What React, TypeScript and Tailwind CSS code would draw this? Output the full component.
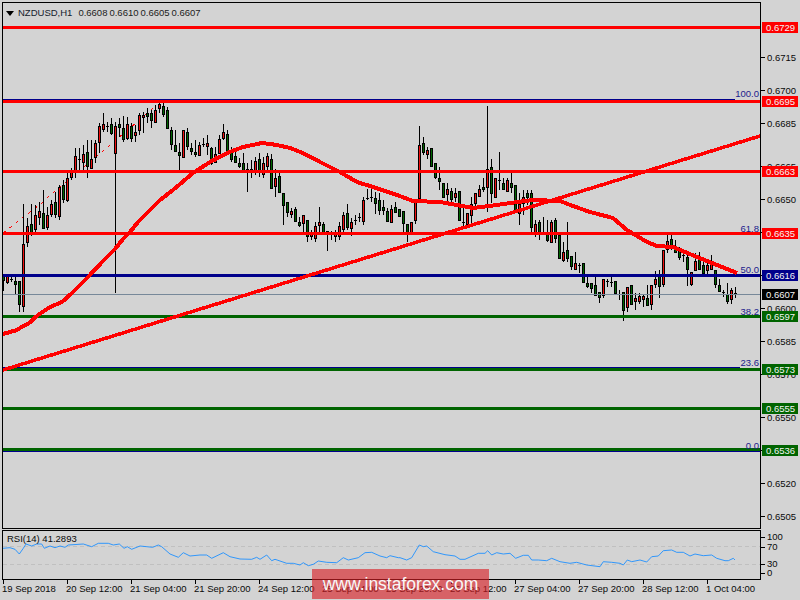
import React from "react";

type Row = [number, number, number, number, string];

const A: Row[] = [
  [275, 275, 280, 291, "g"], [275, 276, 282, 284, "r"], [277, 279, 279, 282, "d"], [277, 281, 284, 295, "g"],
  [281, 281, 304, 312, "g"], [204, 244, 306, 312, "r"], [218, 226, 242, 247, "r"], [204, 224, 232, 236, "g"],
  [205, 215, 229, 233, "r"], [202, 211, 217, 225, "r"], [190, 213, 228, 229, "g"], [207, 215, 227, 230, "r"],
  [200, 204, 214, 217, "r"], [192, 202, 214, 218, "g"],
];

const B: Row[] = [
  [555,562,647,660,"r"],[540,555,596,610,"g"],[520,534,600,605,"r"],[505,516,530,540,"r"],[445,468,510,535,"r"],
  [445,478,478,510,"d"],[435,462,486,510,"r"],[420,457,497,535,"g"],[420,477,503,505,"r"],[420,430,470,490,"r"],
  [370,378,425,460,"r"],[340,373,386,395,"r"],[365,378,378,395,"d"],[355,373,400,405,"g"],[365,378,458,880,"r"],
  [355,373,382,410,"g"],[348,385,418,425,"g"],[350,373,413,420,"r"],[370,378,413,425,"g"],[375,397,405,425,"r"],
  [340,346,391,405,"r"],[335,345,352,400,"r"],[325,340,347,370,"g"],[330,340,360,385,"g"],[315,330,365,365,"r"],
  [310,313,325,340,"r"],[298,318,342,350,"g"],[322,330,385,388,"g"],[380,390,433,450,"g"],[390,435,452,455,"g"],
  [430,457,465,510,"g"],[390,390,470,470,"r"],[385,397,438,450,"g"],[430,445,452,465,"g"],[420,455,462,470,"g"],
  [425,435,465,465,"r"],[415,431,431,440,"d"],[405,430,438,465,"r"],[440,445,490,495,"g"],[440,463,485,485,"r"],
  [405,417,458,460,"r"],[372,397,414,420,"r"],[390,402,460,465,"g"],[440,455,478,485,"g"],[445,468,485,490,"g"],
  [475,489,497,505,"g"],[460,489,517,520,"g"],[490,507,517,575,"g"],[480,507,517,535,"r"],[470,483,517,525,"r"],
  [460,477,517,530,"g"],[470,489,523,535,"r"],[460,468,497,510,"r"],
];

const C: Row[] = [
  [192,207,293,295,"g"],[238,265,288,320,"r"],[245,258,305,310,"g"],[310,310,345,405,"g"],[337,337,365,380,"g"],
  [355,363,372,385,"r"],[350,357,392,392,"g"],[380,397,405,410,"g"],[376,376,398,430,"r"],[390,390,437,455,"g"],
  [420,430,437,450,"r"],[395,408,443,455,"r"],[350,397,404,430,"r"],[395,403,425,435,"g"],[424,424,431,482,"g"],
  [422,430,430,450,"d"],[420,428,437,455,"r"],[395,408,437,450,"r"],[365,375,417,435,"r"],[342,370,410,420,"g"],
  [385,397,415,437,"r"],[375,391,391,405,"d"],[370,382,382,395,"d"],[322,330,392,405,"r"],[297,325,325,330,"d"],
  [293,320,320,335,"d"],[305,324,339,372,"g"],[310,330,360,375,"g"],[330,351,360,375,"g"],[355,363,393,395,"g"],
  [345,357,397,398,"r"],[335,350,365,370,"g"],[357,357,377,377,"g"],[363,363,400,425,"g"],[402,402,425,455,"g"],
  [395,397,430,430,"r"],[335,337,391,403,"r"],[108,165,325,325,"r"],[140,160,187,195,"g"],[170,180,193,208,"r"],
  [175,175,227,228,"g"],[220,220,260,267,"g"],[232,265,272,300,"g"],[280,280,320,325,"g"],[280,298,312,340,"r"],
  [295,304,326,340,"g"],[295,310,320,335,"r"],[304,304,391,391,"g"],[345,397,397,410,"d"],[370,370,403,415,"r"],
  [320,343,376,400,"r"],[310,310,340,360,"r"],[285,297,318,320,"r"],[265,292,298,305,"g"],[48,238,292,365,"r"],
  [208,232,310,340,"g"],[265,265,320,320,"r"],[187,271,271,300,"d"],[265,280,298,300,"g"],[265,270,304,305,"r"],
  [245,280,292,310,"g"],[285,285,365,370,"g"],[310,343,370,405,"r"],[300,320,340,375,"r"],[300,310,320,345,"g"],
];

const D: Row[] = [
  [0,10,110,130,"g"],[90,102,126,140,"r"],[90,96,130,150,"g"],[80,125,125,135,"d"],[90,125,150,155,"g"],
  [90,96,155,155,"r"],[85,90,145,160,"g"],[135,135,203,205,"g"],[155,186,210,215,"r"],[96,180,203,215,"g"],
  [197,197,227,240,"g"],[185,220,236,240,"r"],[220,225,225,250,"d"],[220,220,276,280,"g"],[255,280,288,295,"g"],
  [280,280,293,310,"g"],[255,285,315,315,"g"],[307,307,320,340,"g"],[268,268,314,325,"r"],[268,272,272,292,"d"],
  [255,277,277,292,"d"],[273,273,308,312,"g"],[300,312,312,330,"d"],[306,306,360,392,"g"],[292,292,352,365,"r"],
  [286,286,342,345,"g"],[310,324,332,360,"r"],[310,319,332,342,"r"],[312,319,326,350,"r"],[285,324,346,348,"g"],
  [285,285,342,360,"r"],[242,267,282,295,"r"],[240,258,288,325,"g"],[180,180,282,292,"r"],[125,153,177,190,"r"],
  [130,147,165,180,"g"],[150,168,187,190,"g"],[170,180,202,210,"g"],[185,195,195,215,"d"],[190,201,236,287,"g"],
  [245,246,281,287,"r"],[190,213,240,240,"r"],[185,204,237,240,"g"],[215,225,248,255,"g"],[215,225,240,255,"r"],
  [195,218,237,240,"r"],[240,240,282,295,"g"],[268,285,302,305,"g"],[300,306,306,322,"d"],[280,312,332,342,"g"],
  [295,300,326,342,"r"],[290,310,310,325,"d"],
];

const conv = (y0: number, rows: Row[]): Row[] =>
  rows.map(([h, t, b, l, c]) => [
    Math.round(y0 + h / 3),
    Math.round(y0 + t / 3),
    Math.round(y0 + b / 3),
    Math.round(y0 + l / 3),
    c,
  ]);

const candles: Row[] = [...A, ...conv(0, B), ...conv(90, C), ...conv(190, D)];

const ma =
  "3,334 17,330 23,326 28,324 38,315 50,307 62,302 72,293 88,277 103,261 115,249 123,239 130,232 138,222 147,213 160,200 173,190 193,173 210,162 227,153 243,147 262,143 270,144 277,145 290,148 303,153 320,162 340,172 357,182 373,187 397,195 413,201 440,202 457,205 473,208 497,205 510,203 533,200 560,201 573,206 590,212 613,218 627,230 647,242 657,246 673,247 697,257 717,265 737,273";

const z6 = [[8,85],[30,83],[45,88],[58,102],[70,85],[78,72],[95,78],[110,72],[125,72],[133,85],[150,78],[165,83],[180,78],[195,82],[205,75],[250,72],[275,80],[295,70],[325,70],[340,75],[358,72],[372,85],[382,80],[395,88],[420,78],[440,80],[458,82],[475,75],[485,80],[510,102],[535,112],[550,98],[570,108],[600,105],[620,105],[635,115],[670,98],[690,110],[720,117],[755,118],[770,112],[780,118],[800,105],[815,122],[825,118],[860,130],[880,130],[900,135],[910,128],[925,137],[940,133],[955,123],[980,127],[1010,128],[1030,113],[1045,120],[1075,113],[1095,98],[1115,97],[1140,108],[1160,113],[1170,107],[1195,113]];
const z7 = [[0,113],[20,120],[35,113],[58,75],[70,80],[80,78],[100,95],[135,104],[165,108],[180,118],[195,118],[235,100],[255,100],[263,92],[275,105],[290,98],[310,102],[330,100],[347,115],[370,106],[385,106],[395,120],[415,120],[440,122],[455,115],[480,125],[510,130],[530,127],[560,135],[600,140],[610,125],[635,127],[660,130],[670,135],[682,120],[695,125],[720,120],[740,126],[755,110],[775,108],[790,92],[815,90],[830,97],[850,97],[870,108],[885,102],[910,107],[935,105],[950,115],[975,122],[985,122],[1000,115],[1005,120]];
const rsi = [
  ...z6.map(([x, y]) => `${(x / 3).toFixed(1)},${(520 + y / 3).toFixed(1)}`),
  ...z7.map(([x, y]) => `${(400 + x / 3).toFixed(1)},${(520 + y / 3).toFixed(1)}`),
].join(" ");

const axis: [number, string][] = [
  [58, "0.6715"], [91, "0.6700"], [124, "0.6685"], [167, "0.6665"], [200, "0.6650"], [233, "0.6635"], [276, "0.6615"],
  [309, "0.6600"], [342, "0.6585"], [375, "0.6570"], [418, "0.6550"], [451, "0.6535"], [484, "0.6520"], [517, "0.6505"],
];

const tags: [number, string, string][] = [
  [27, "0.6729", "bg-[#ff0000]"], [101, "0.6695", "bg-[#ff0000]"], [171, "0.6663", "bg-[#ff0000]"], [233, "0.6635", "bg-[#ff0000]"],
  [275, "0.6616", "bg-[#00008b]"], [294, "0.6607", "bg-black"], [316, "0.6597", "bg-[#006400]"], [369, "0.6573", "bg-[#006400]"],
  [408, "0.6555", "bg-[#006400]"], [450, "0.6536", "bg-[#006400]"],
];

const hlines: [number, string][] = [
  [27, "#ff0000"], [101, "#ff0000"], [171, "#ff0000"], [233, "#ff0000"], [275, "#00008b"],
  [316, "#006400"], [369, "#006400"], [408, "#006400"], [449, "#006400"],
];

const fibs: [number, string][] = [
  [94, "100.0"], [229, "61.8"], [270, "50.0"], [312, "38.2"], [363, "23.6"], [446, "0.0"],
];

const times = [
  "19 Sep 2018", "20 Sep 12:00", "21 Sep 04:00", "21 Sep 20:00", "24 Sep 12:00", "25 Sep 04:00",
  "25 Sep 20:00", "26 Sep 12:00", "27 Sep 04:00", "27 Sep 20:00", "28 Sep 12:00", "1 Oct 04:00",
];

const rsiAxis: [number, string][] = [[537, "100"], [547, "70"], [564, "30"], [573, "0"]];

const Candle = ({ row, i }: { row: Row; i: number }) => {
  const x = 3 + 4 * i;
  const [h, t, b, l, c] = row;
  if (c === "d" || b <= t) {
    return (
      <g>
        <rect x={x} y={h} width={1} height={Math.max(l - h, 1)} fill="#000" />
        <rect x={x - 1} y={t} width={3} height={1} fill="#000" />
      </g>
    );
  }
  return (
    <g>
      <rect x={x} y={h} width={1} height={Math.max(l - h, 1)} fill="#000" />
      <rect x={x - 1} y={t} width={3} height={b - t + 1} fill="#000" />
      {b - t > 1 && <rect x={x} y={t + 1} width={1} height={b - t - 1} fill={c === "r" ? "#f01010" : "#006400"} />}
    </g>
  );
};

export default function App() {
  return (
    <div className="relative w-[800px] h-[600px] overflow-hidden bg-[#d3d3d3] pt-[2px] pl-[2px] text-[9.5px] leading-[10px] text-[#0a0a0a] font-['Liberation_Sans',sans-serif] flex flex-col">
      {/* main chart row */}
      <div className="flex h-[527px] shrink-0">
        <div className="relative w-[759px] h-[527px] border border-black overflow-hidden">
          <svg width={757} height={525} viewBox="3 3 757 525" shapeRendering="crispEdges" className="block">
            <polyline points="3,233 43,202 48,197 110,145 157,105" fill="none" stroke="#ff0000" strokeWidth={1} strokeDasharray="3 5" />
            {candles.map((r, i) => (
              <Candle key={i} row={r} i={i} />
            ))}
            <rect x={3} y={99} width={732} height={1} fill="#00008b" />
            <rect x={3} y={367} width={737} height={1} fill="#00008b" />
            <rect x={3} y={451} width={757} height={1} fill="#00008b" />
            <rect x={3} y={294} width={757} height={1} fill="#778899" />
            {hlines.map(([y, c]) => (
              <rect key={y} x={3} y={y - 1} width={757} height={3} fill={c} />
            ))}
            <polyline points={ma} fill="none" stroke="#ff0000" strokeWidth={4} strokeLinejoin="round" />
            <line x1={3} y1={370} x2={760} y2={136} stroke="#ff0000" strokeWidth={3.5} />
          </svg>

          <div className="absolute left-[3px] top-[5px] flex items-center h-[10px]">
            <svg width={8} height={5} viewBox="0 0 8 5" className="mr-[4px]">
              <polygon points="0,0 8,0 4,5" fill="#000" />
            </svg>
            <span className="text-[#14202c]">NZDUSD,H1</span>
            <span className="ml-[6px] flex gap-[2px] text-[#1c1c1c]">
              <span>0.6608</span>
              <span>0.6610</span>
              <span>0.6605</span>
              <span>0.6607</span>
            </span>
          </div>

          {fibs.map(([y, t]) => (
            <span
              key={t}
              className="absolute right-[1px] text-[#20208c]"
              style={{ top: y - 8 }}
            >
              {t}
            </span>
          ))}
        </div>

        <div className="relative flex-1">
          {axis.map(([y, t]) => (
            <div key={t} className="absolute left-0 flex items-center h-[11px]" style={{ top: y - 8 }}>
              <span className="w-[4px] h-px bg-black" />
              <span className="ml-[2px]">{t}</span>
            </div>
          ))}
          {tags.map(([y, t, c]) => (
            <div
              key={t}
              className={`absolute left-[1px] w-[36px] h-[11px] pl-[4px] flex items-center text-[#f4f4f4] ${c}`}
              style={{ top: y - 7 }}
            >
              {t}
            </div>
          ))}
        </div>
      </div>

      {/* RSI row */}
      <div className="flex h-[50px] mt-[1px] shrink-0">
        <div className="relative w-[759px] h-[50px] border border-black overflow-hidden">
          <svg width={757} height={48} viewBox="3 531 757 48" className="block">
            <line x1={3} y1={546.5} x2={760} y2={546.5} stroke="#c0c0c0" strokeDasharray="4 3" />
            <line x1={3} y1={564.5} x2={760} y2={564.5} stroke="#c0c0c0" strokeDasharray="4 3" />
            <polyline points={rsi} fill="none" stroke="#1e90ff" strokeWidth={0.9} />
          </svg>
          <span className="absolute left-[4px] top-[3px]">RSI(14) 41.2893</span>
        </div>
        <div className="relative flex-1">
          {rsiAxis.map(([y, t]) => (
            <div key={t} className="absolute left-0 flex items-center h-[10px]" style={{ top: y - 535 }}>
              <span className="w-[4px] h-px bg-black" />
              <span className="ml-[2px]">{t}</span>
            </div>
          ))}
        </div>
      </div>

      {/* time axis */}
      <div className="grid grid-cols-[repeat(12,64px)] mt-0">
        {times.map((t) => (
          <div key={t} className="flex flex-col">
            <span className="w-px h-[4px] ml-[1px] bg-black" />
            <span className="whitespace-nowrap mt-[-1px] leading-[12px]">{t}</span>
          </div>
        ))}
      </div>

      {/* watermark */}
      <div className="absolute left-[312px] top-[569px] w-[177px] h-[30px] bg-[#d81f24a0] flex items-center justify-center text-[#f8f8f8] text-[17.5px] font-['Liberation_Sans',sans-serif]">
        www.instaforex.com
      </div>
    </div>
  );
}
